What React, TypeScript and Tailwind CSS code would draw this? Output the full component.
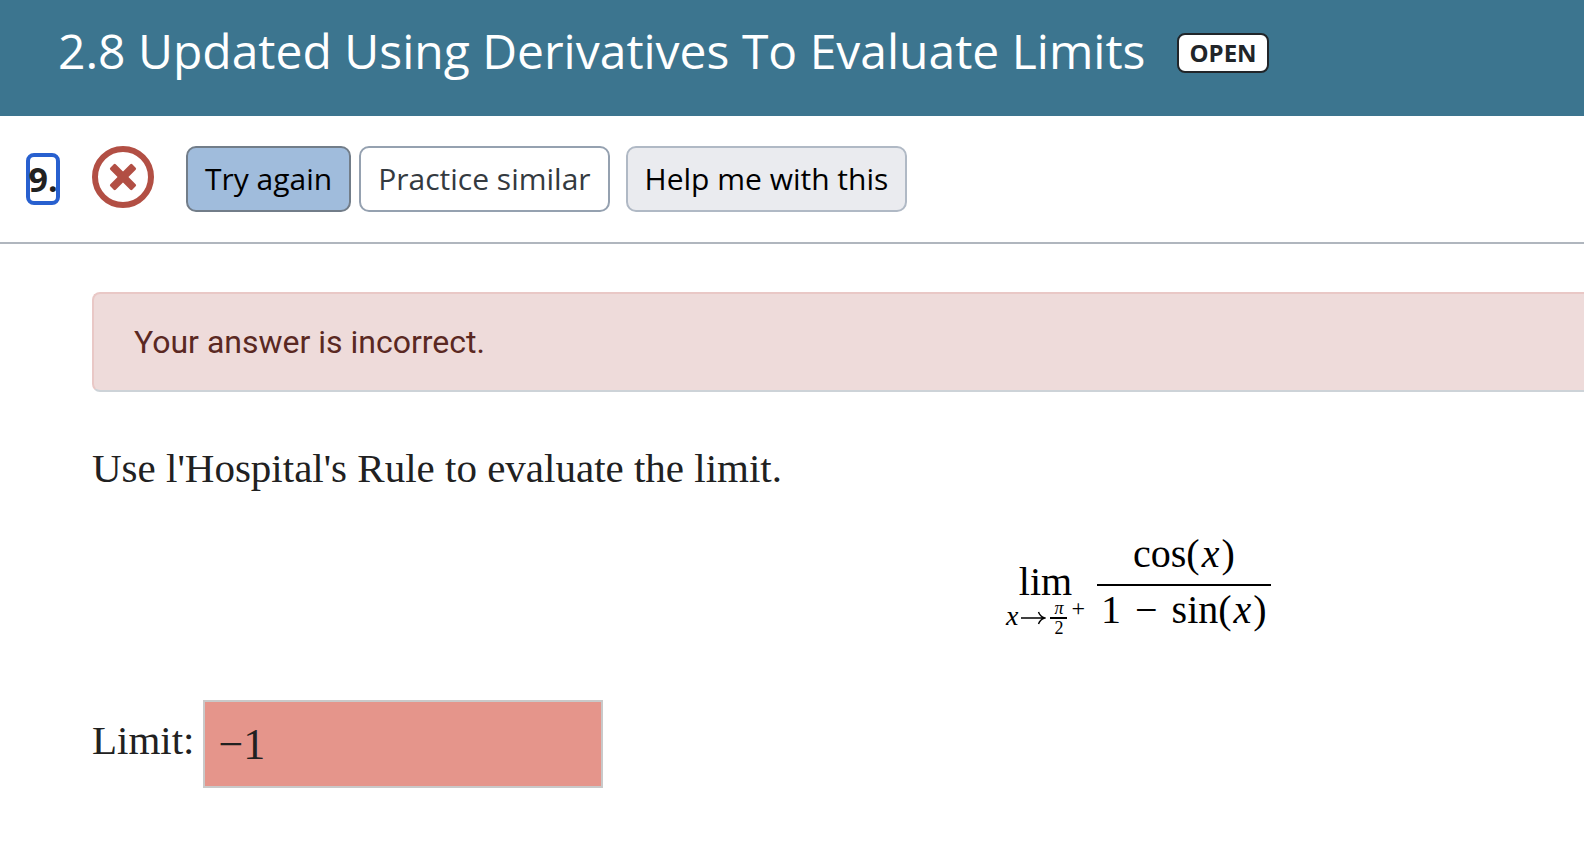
import {useState} from "react"
import type {ReactNode} from "react"

type ActionButtonProps = {
  className: string
  children: ReactNode
}

function ActionButton({className, children}: ActionButtonProps) {
  return (
    <button
      type="button"
      className={`h-[66px] rounded-[10px] border-2 px-[17px] text-[30px] leading-[40px] whitespace-nowrap ${className}`}>
      {children}
    </button>
  )
}

function IncorrectIcon() {
  return (
    <svg viewBox="0 0 62 62" className="size-[62px] shrink-0" role="img" aria-label="Incorrect">
      <circle cx="31" cy="31" r="28" fill="none" stroke="#b24f44" strokeWidth="6" />
      <g fill="#b24f44" transform="rotate(45 31 31)">
        <rect x="15.5" y="27.2" width="31" height="7.6" rx="1.4" />
        <rect x="27.2" y="15.5" width="7.6" height="31" rx="1.4" />
      </g>
    </svg>
  )
}

function Arrow() {
  return (
    <svg viewBox="0 0 26 14" className="h-[14px] w-[26px]" aria-hidden="true">
      <path
        d="M1 7H24.5M18.5 1C19.5 4 21.5 6 24.8 7C21.5 8 19.5 10 18.5 13"
        stroke="currentColor"
        strokeWidth="1.4"
        fill="none"
      />
    </svg>
  )
}

function LimitExpression() {
  return (
    <div className="flex items-center gap-3 font-['Liberation_Serif',serif] text-[40px] leading-[44px] text-black">
      <div className="flex flex-col items-center pt-9">
        <span className="leading-[36px]">lim</span>
        <div className="flex h-[36px] items-center text-[28px] leading-[28px]">
          <i className="mr-[2px] mb-1">x</i>
          <Arrow />
          <span className="ml-1 flex flex-col items-center text-[18px] leading-[18px]">
            <i className="px-1">π</i>
            <span className="w-full border-t-2 border-black text-center">2</span>
          </span>
          <span className="mb-5 ml-1 text-[24px] leading-[20px]">+</span>
        </div>
      </div>
      <div className="flex flex-col items-center">
        <span className="pb-2">
          cos(<i className="mx-[2px]">x</i>)
        </span>
        <span className="border-t-2 border-black px-1 pt-[2px]">
          1<span className="mx-1"> − </span>sin(<i className="mx-[2px]">x</i>)
        </span>
      </div>
    </div>
  )
}

export default function App() {
  const [limit, setLimit] = useState("−1")

  return (
    <div className="min-h-screen bg-white font-['Open_Sans',sans-serif] text-[#212121]">
      {/* Assignment title */}
      <header className="flex h-[116px] items-start gap-8 bg-[#3c758f] px-[58px] pt-[18px]">
        <h1 className="text-[48px] leading-[66px] whitespace-nowrap text-white">
          2.8 Updated Using Derivatives To Evaluate Limits
        </h1>
        <span className="mt-[15px] rounded-lg border-2 border-[#212529] bg-white px-[10px] text-[24px] leading-[36px] font-bold text-[#212529]">
          OPEN
        </span>
      </header>

      {/* Question toolbar */}
      <div className="flex items-center border-b-2 border-[#b0b6be] px-[26px] py-[30px]">
        <h2 className="rounded-lg border-4 border-[#2860cf] text-[34px] leading-[44px] font-bold">
          <span className="flex w-[26px] justify-center">9.</span>
        </h2>
        <div className="mx-8 mb-1">
          <IncorrectIcon />
        </div>
        <div className="flex gap-2">
          <ActionButton className="border-[#727d89] bg-[#a0bcdc] text-black">
            Try again
          </ActionButton>
          <ActionButton className="border-[#95a1b0] bg-white text-[#343a40]">
            Practice similar
          </ActionButton>
        </div>
        <div className="ml-4">
          <ActionButton className="border-[#b0b9c5] bg-[#eaebef] text-black">
            Help me with this
          </ActionButton>
        </div>
      </div>

      <main className="pt-12 pl-[92px]">
        <div
          role="alert"
          className="rounded-l-lg border-2 border-r-0 border-[#e9c8c6] border-b-[#cdd3d8] bg-[#eedbda] px-10 py-6 font-[Roboto,sans-serif] text-[32px] leading-[48px] text-[#5a2822]">
          Your answer is incorrect.
        </div>

        <div className="pt-12 font-['Liberation_Serif',serif] text-[41px] leading-[56px]">
          <p>Use l'Hospital's Rule to evaluate the limit.</p>

          <div className="flex justify-end pt-8 pr-[21%]">
            <LimitExpression />
          </div>

          <div className="flex items-center gap-2 pt-16">
            <label htmlFor="limit" className="pb-2">
              Limit:
            </label>
            <input
              id="limit"
              type="text"
              value={limit}
              onChange={e => setLimit(e.target.value)}
              className="h-[88px] w-[400px] border-2 border-[#c9c9c9] bg-[#e5958b] px-[14px] text-[44px]"
            />
          </div>
        </div>
      </main>
    </div>
  )
}
